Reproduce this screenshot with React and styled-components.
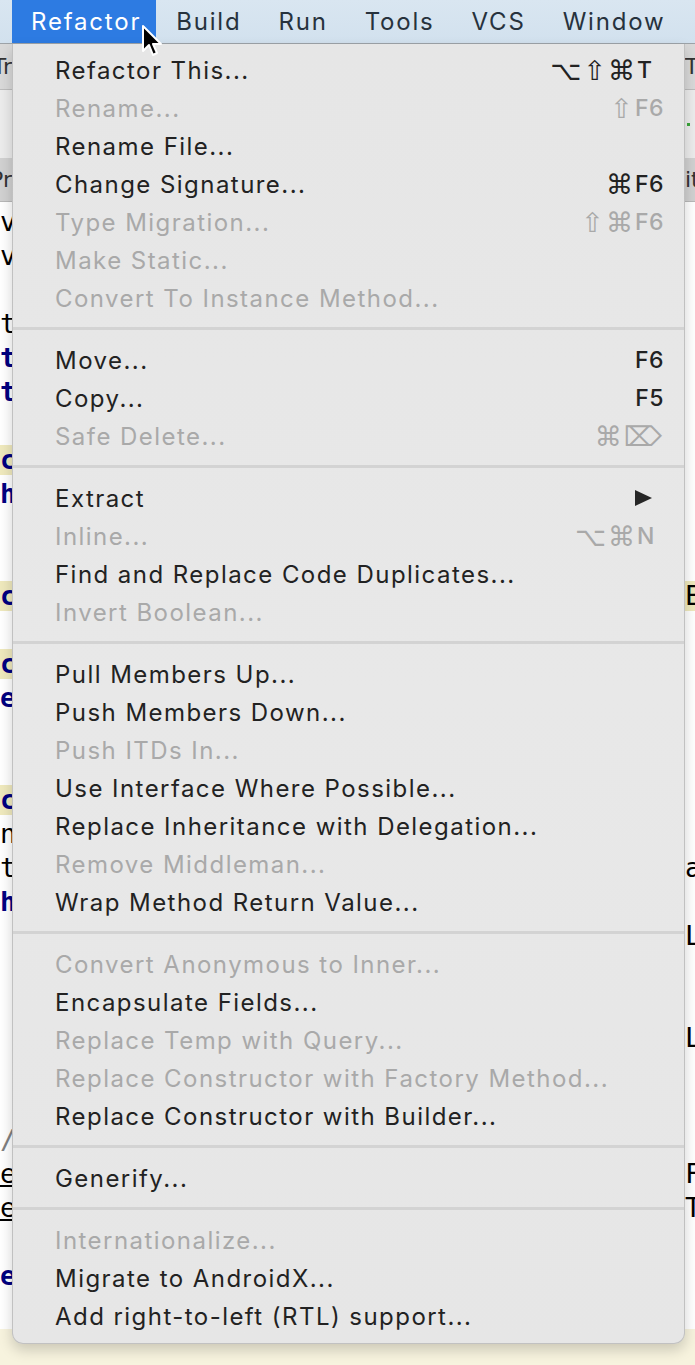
import React from "react";
import styled, { createGlobalStyle } from "styled-components";

const Global = createGlobalStyle`
  html, body { margin: 0; padding: 0; }
  body { width: 695px; height: 1365px; overflow: hidden; background: #ffffff; font-family: Inter, "Noto Sans", sans-serif; }
  #root { width: 695px; height: 1365px; }
`;

const Screen = styled.div`
  position: relative;
  width: 695px;
  height: 1365px;
  display: flex;
  flex-direction: column;
  overflow: hidden;
`;

const MenuBar = styled.div`
  height: 44px;
  flex: none;
  display: flex;
  align-items: stretch;
  padding-left: 12px;
  background: linear-gradient(#d9e6f1, #d2e1ee);
  border-bottom: 1px solid #9da3a8;
  box-sizing: border-box;
`;

const MenuTitle = styled.div`
  display: flex;
  align-items: center;
  padding: 0 ${p => (p.$active ? 15 : 17)}px 0 ${p => (p.$active ? 19 : 20)}px;
  font-size: 24px;
  letter-spacing: 1.8px;
  color: ${p => (p.$active ? "#ffffff" : "#27323d")};
  background: ${p => (p.$active ? "#2d7be2" : "transparent")};
`;

const Band = styled.div`
  flex: none;
  height: ${p => p.$h}px;
  background: ${p => p.$bg};
  border-bottom: ${p => (p.$line ? `1px solid ${p.$line}` : "none")};
  box-sizing: border-box;
  display: flex;
  align-items: center;
  justify-content: space-between;
  font-family: "DejaVu Sans", sans-serif;
  font-size: 22px;
  color: #333;
`;

const EdgeText = styled.span`
  display: block;
  width: ${p => (p.$right ? 10 : 12)}px;
  overflow: hidden;
  white-space: nowrap;
  direction: ${p => (p.$right ? "ltr" : "rtl")};
`;

const GreenDot = styled.span`
  display: block;
  width: 3px;
  height: 3px;
  margin-right: 5px;
  background: #3aa63a;
`;

const Editor = styled.div`
  flex: 1;
  background: #ffffff;
  padding-top: 3px;
  display: flex;
  flex-direction: column;
`;

const CodeLine = styled.div`
  height: 34px;
  flex: none;
  display: grid;
  grid-template-columns: 12px 1fr 10px;
  align-items: center;
  font-family: "DejaVu Sans Mono", monospace;
  font-size: 27px;
`;

const Chunk = styled.span`
  display: block;
  overflow: hidden;
  white-space: nowrap;
  line-height: 30px;
  color: ${p => (p.$kind === "kw" ? "#000080" : p.$kind === "cm" ? "#808080" : "#000000")};
  font-weight: ${p => (p.$kind === "kw" ? 700 : 400)};
  background: ${p => (p.$mark ? "#efe9bd" : "transparent")};
  text-decoration: ${p => (p.$under ? "underline" : "none")};
  text-align: ${p => (p.$right ? "left" : "right")};
`;

const Footer = styled.div`
  height: 36px;
  flex: none;
  background: #f7f3de;
`;

/* ---------- dropdown ---------- */

const Dropdown = styled.div`
  position: absolute;
  left: 12px;
  top: 44px;
  width: 673px;
  box-sizing: border-box;
  padding: 7px 0 8px;
  background: linear-gradient(180deg, #e6e6e6 0%, #e8e8e8 50%, #e6e6e6 100%);
  border: 1px solid rgba(0, 0, 0, 0.16);
  border-top: none;
  border-radius: 0 0 11px 11px;
  box-shadow: 0 6px 14px rgba(0, 0, 0, 0.18);
  display: flex;
  flex-direction: column;
`;

const Item = styled.div`
  height: 38px;
  display: flex;
  align-items: center;
  justify-content: space-between;
  padding: 0 20px 0 42px;
  font-size: 24px;
  letter-spacing: 1.45px;
  color: ${p => (p.$disabled ? "#a9a9a9" : "#222222")};
  white-space: nowrap;
`;

const Shortcut = styled.span`
  display: flex;
  align-items: center;
  color: ${p => (p.$disabled ? "#a9a9a9" : "#222222")};
  letter-spacing: 0;
`;

const Mod = styled.span`
  font-family: "DejaVu Sans", sans-serif;
  font-size: 27px;
  line-height: 1;
  margin-right: 2px;
`;

const KeyCap = styled.span`
  min-width: 27px;
  text-align: left;
  font-size: 23px;
  font-weight: 500;
  letter-spacing: 0.5px;
`;

const SubArrow = styled.span`
  width: 0;
  height: 0;
  margin-right: 12px;
  border-top: 8px solid transparent;
  border-bottom: 8px solid transparent;
  border-left: 17px solid #262626;
`;

const Separator = styled.div`
  height: 3px;
  margin: 10px 0 11px;
  background: #d3d3d3;
`;

const Cursor = styled.svg`
  position: absolute;
  left: 140px;
  top: 24px;
  width: 24px;
  height: 34px;
`;

const groups = [
  [
    ["Refactor This...", "⌥⇧⌘T"],
    ["Rename...", "⇧F6", true],
    ["Rename File..."],
    ["Change Signature...", "⌘F6"],
    ["Type Migration...", "⇧⌘F6", true],
    ["Make Static...", null, true],
    ["Convert To Instance Method...", null, true],
  ],
  [
    ["Move...", "F6"],
    ["Copy...", "F5"],
    ["Safe Delete...", "⌘⌦", true],
  ],
  [
    ["Extract", "sub"],
    ["Inline...", "⌥⌘N", true],
    ["Find and Replace Code Duplicates..."],
    ["Invert Boolean...", null, true],
  ],
  [
    ["Pull Members Up..."],
    ["Push Members Down..."],
    ["Push ITDs In...", null, true],
    ["Use Interface Where Possible..."],
    ["Replace Inheritance with Delegation..."],
    ["Remove Middleman...", null, true],
    ["Wrap Method Return Value..."],
  ],
  [
    ["Convert Anonymous to Inner...", null, true],
    ["Encapsulate Fields..."],
    ["Replace Temp with Query...", null, true],
    ["Replace Constructor with Factory Method...", null, true],
    ["Replace Constructor with Builder..."],
  ],
  [["Generify..."]],
  [
    ["Internationalize...", null, true],
    ["Migrate to AndroidX..."],
    ["Add right-to-left (RTL) support..."],
  ],
];

const SYMS = "⌥⇧⌘⌦";

function ShortcutKeys({ keys, disabled }) {
  const mods = [];
  let cap = "";
  for (const ch of keys) {
    if (SYMS.includes(ch)) mods.push(ch);
    else cap += ch;
  }
  return (
    <Shortcut $disabled={disabled}>
      {mods.map((m, i) => (
        <Mod key={i}>{m}</Mod>
      ))}
      {cap ? <KeyCap>{cap}</KeyCap> : null}
    </Shortcut>
  );
}

const code = {
  0: { l: ["v"] },
  1: { l: ["v"] },
  3: { l: ["t"] },
  4: { l: ["t", "kw"] },
  5: { l: ["t", "kw"] },
  7: { l: ["c", "kw", true] },
  8: { l: ["h", "kw"] },
  11: { l: ["c", "kw", true], r: ["E", null, true] },
  13: { l: ["c", "kw", true] },
  14: { l: ["e", "kw"] },
  17: { l: ["c", "kw", true] },
  18: { l: ["n"] },
  19: { l: ["t"], r: ["ar"] },
  20: { l: ["h", "kw"] },
  21: { r: ["Le"] },
  24: { r: ["Le"] },
  27: { l: ["/", "cm"] },
  28: { l: ["e", null, false, true], r: ["F("] },
  29: { l: ["e", null, false, true], r: ["T"] },
  31: { l: ["e", "kw"] },
};

export default function App() {
  const lines = [];
  for (let i = 0; i < 33; i++) {
    const c = code[i] || {};
    lines.push(
      <CodeLine key={i}>
        {c.l ? (
          <Chunk $kind={c.l[1]} $mark={c.l[2]} $under={c.l[3]}>{c.l[0]}</Chunk>
        ) : <span />}
        <span />
        {c.r ? (
          <Chunk $right $kind={c.r[1]} $mark={c.r[2]}>{c.r[0]}</Chunk>
        ) : <span />}
      </CodeLine>
    );
  }

  return (
    <>
      <Global />
      <Screen>
        <MenuBar>
          <MenuTitle $active>Refactor</MenuTitle>
          <MenuTitle>Build</MenuTitle>
          <MenuTitle>Run</MenuTitle>
          <MenuTitle>Tools</MenuTitle>
          <MenuTitle>VCS</MenuTitle>
          <MenuTitle>Window</MenuTitle>
        </MenuBar>
        <Band $h={46} $bg="#d9d9d9" $line="#bdbdbd">
          <EdgeText>Tr</EdgeText>
          <EdgeText $right>Tr</EdgeText>
        </Band>
        <Band $h={68} $bg="#ececec">
          <span />
          <GreenDot />
        </Band>
        <Band $h={44} $bg="#d1d1d1" $line="#b8b8b8">
          <EdgeText>Pr</EdgeText>
          <EdgeText $right>it</EdgeText>
        </Band>
        <Editor>{lines}</Editor>
        <Footer />

        <Dropdown>
          {groups.map((g, gi) => (
            <React.Fragment key={gi}>
              {gi > 0 && <Separator />}
              {g.map(([label, sc, dis]) => (
                <Item key={label} $disabled={dis}>
                  <span>{label}</span>
                  {sc === "sub" ? <SubArrow /> : sc ? <ShortcutKeys keys={sc} disabled={dis} /> : null}
                </Item>
              ))}
            </React.Fragment>
          ))}
        </Dropdown>

        <Cursor viewBox="0 0 24 34">
          <path d="M3 2 L3 27 L9 21 L13 31 L17 29 L13 20 L21 20 Z" fill="#000" stroke="#fff" strokeWidth="2" strokeLinejoin="round" />
        </Cursor>
      </Screen>
    </>
  );
}
